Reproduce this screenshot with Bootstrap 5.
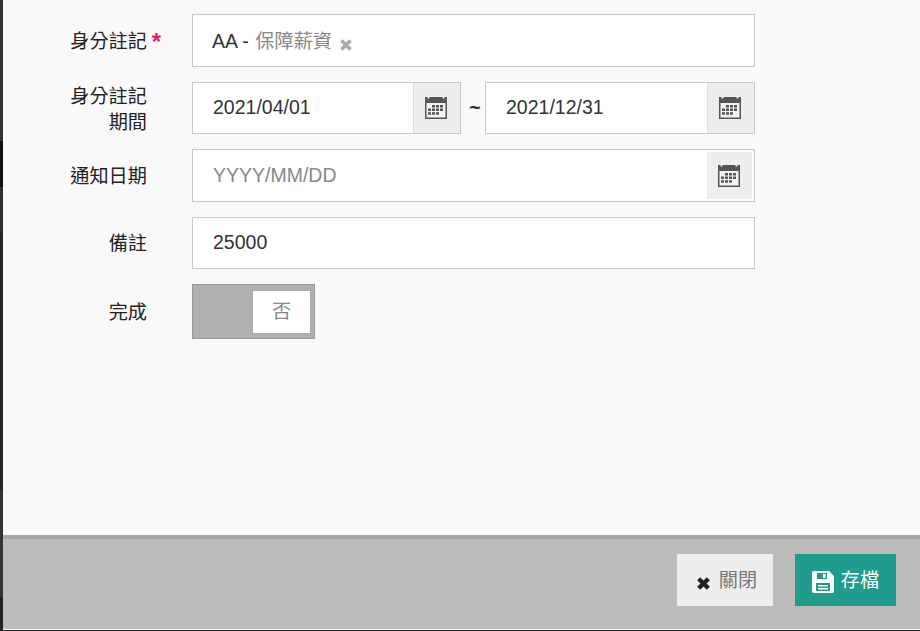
<!DOCTYPE html>
<html lang="zh-Hant"><head><meta charset="utf-8">
<link rel="stylesheet" href="https://cdn.jsdelivr.net/npm/bootstrap@5.3.0/dist/css/bootstrap.min.css">
<style>
html,body{height:631px;overflow:hidden;margin:0}
body{background:linear-gradient(#333 0 141px,#111 141px 187px,#2a3236 187px 232px,#282828 232px 490px,#333 490px 597px,#222 597px);font-family:"Liberation Sans","Noto Sans CJK TC",sans-serif;font-size:19.5px;color:#333}
.shell{margin-left:3px;height:630px;background:#f9f9f9;display:flex;flex-direction:column}
.body-area{flex:1;padding:14px 0 0 0}
.frow{display:flex;margin-bottom:15px;width:752px}
.flabel{width:144px;text-align:right;font-size:19.2px;line-height:26px;color:#222;margin:0 0 -1px;padding-top:1px;align-self:center;flex:none}
.flabel.twoline{margin-bottom:-2px;padding-top:2px}
.flabel i{font-style:normal;font-weight:700;font-size:24px;line-height:20px;color:#e6186d;display:inline-block;width:14px;margin-right:-14px;text-align:right;vertical-align:-2px}
.fctl{margin-left:45px;flex:1;min-width:0;display:flex;align-items:center}
.boxx{height:53px;border:1px solid #c8c8c8;background:#fff;display:flex;align-items:center;flex:1;min-width:0}
.boxx.h52{height:52px}
.boxx input{border:0;outline:0;background:transparent;flex:1;width:0;min-width:0;padding:0 0 0 20px;height:100%;font:inherit;color:#333}
.boxx.h52 input{padding-bottom:2px}
.boxx input::placeholder{color:#888;opacity:1}
.tagtxt{padding-left:19px;padding-top:2px;color:#333}
.tagtxt span{color:#888;font-size:19.2px;margin-left:1px}
.tagtxt svg{margin-left:2px;vertical-align:-4px}
.calbtn{width:47px;padding-right:2px;align-self:stretch;background:#eee;border-left:1px solid #ddd;display:flex;align-items:center;justify-content:center;flex:none}
.calbtn.gap1{border-left:0;margin:2px 2px 2px 0;width:45px;padding-right:1px}
.w269{flex:0 0 269px}
.tilde{width:24px;text-align:center;flex:none;line-height:1;font-weight:700;padding-left:4px}
.switchx{width:123px;height:55px;background:#b0b0b0;border:1px solid #999;display:flex;justify-content:flex-end;padding:5px 3px 4px 0}
.knob{width:59px;background:#fff;border:1px solid #aaa;color:#888;display:flex;align-items:center;justify-content:center;font-size:19.2px}
.footx{height:95px;flex:none;background:#bcbcbc;border-top:4px solid #a8a8a8;border-bottom:1px solid #fff;display:flex;justify-content:flex-end;align-items:flex-start;gap:22px;padding:15px 24px 0 0}
.bclose,.bsave{height:52px;border:0;border-radius:0;font-size:19.2px;display:flex;align-items:center;justify-content:center;padding:2px 0 0;gap:7px}
.bclose{width:96px;background:#eee;color:#777;padding-left:3px;gap:8px}
.bclose svg{margin-top:4px}
.bsave{width:101px;background:#209c8c;color:#fff}
.bsave svg{margin-top:1px}
</style></head><body>
<svg width="0" height="0" class="position-absolute"><defs>
<symbol id="cal" viewBox="0 0 22 22">
<path fill="#555" d="M0 0h2.500v1.500h2V0h13v1.500h2V0H22v22H0z"/>
<rect x="1.500" y="6" width="19" height="14.500" fill="#f2f2f2"/>
<g fill="#555"><rect x="7" y="8" width="3" height="2.500"/><rect x="11" y="8" width="3" height="2.500"/><rect x="15" y="8" width="3" height="2.500"/>
<rect x="3" y="11.500" width="3" height="2.500"/><rect x="7" y="11.500" width="3" height="2.500"/><rect x="11" y="11.500" width="3" height="2.500"/><rect x="15" y="11.500" width="3" height="2.500"/>
<rect x="3" y="15.200" width="3" height="2.500"/><rect x="7" y="15.200" width="3" height="2.500"/><rect x="11" y="15.200" width="3" height="2.500"/></g>
</symbol></defs></svg>
<div class="shell">
<form class="body-area">
<div class="frow"><label class="flabel">身分註記<i>*</i></label><div class="fctl"><div class="boxx"><div class="tagtxt">AA - <span>保障薪資</span> <svg width="14" height="14" viewBox="0 0 14 14"><path d="M2.500 2.500l9 9M11.500 2.500l-9 9" stroke="#aaa" stroke-width="3.800"/></svg></div></div></div></div>
<div class="frow"><label class="flabel twoline">身分註記<br>期間</label><div class="fctl">
<div class="boxx h52 w269"><input value="2021/04/01" aria-label="開始"><div class="calbtn"><svg width="22" height="22"><use href="#cal"/></svg></div></div>
<div class="tilde">~</div>
<div class="boxx h52"><input value="2021/12/31" aria-label="結束"><div class="calbtn"><svg width="22" height="22"><use href="#cal"/></svg></div></div>
</div></div>
<div class="frow"><label class="flabel">通知日期</label><div class="fctl"><div class="boxx"><input placeholder="YYYY/MM/DD" aria-label="通知日期"><div class="calbtn gap1"><svg width="22" height="22"><use href="#cal"/></svg></div></div></div></div>
<div class="frow"><label class="flabel">備註</label><div class="fctl"><div class="boxx h52"><input value="25000" aria-label="備註"></div></div></div>
<div class="frow"><label class="flabel">完成</label><div class="fctl"><div class="switchx"><div class="knob">否</div></div></div></div>
</form>
<div class="footx">
<button type="button" class="btn bclose"><svg width="15" height="15" viewBox="0 0 14 14"><path d="M2.500 2.500l9 9M11.500 2.500l-9 9" stroke="#222" stroke-width="4"/></svg>關閉</button>
<button type="button" class="btn bsave"><svg width="22" height="22" viewBox="0 0 22 22"><path fill="#fff" fill-rule="evenodd" d="M2 0h15l5 5v15a2 2 0 0 1-2 2H2a2 2 0 0 1-2-2V2a2 2 0 0 1 2-2zM5 2v6h10V2zM4 12v8h14v-8z"/><rect x="11" y="3" width="2.500" height="4" fill="#fff"/><rect x="6" y="14" width="10" height="1.500" fill="#fff"/><rect x="6" y="17" width="10" height="1.500" fill="#fff"/></svg>存檔</button>
</div>
</div>
<script src="https://cdn.jsdelivr.net/npm/bootstrap@5.3.0/dist/js/bootstrap.bundle.min.js"></script>
</body></html>
